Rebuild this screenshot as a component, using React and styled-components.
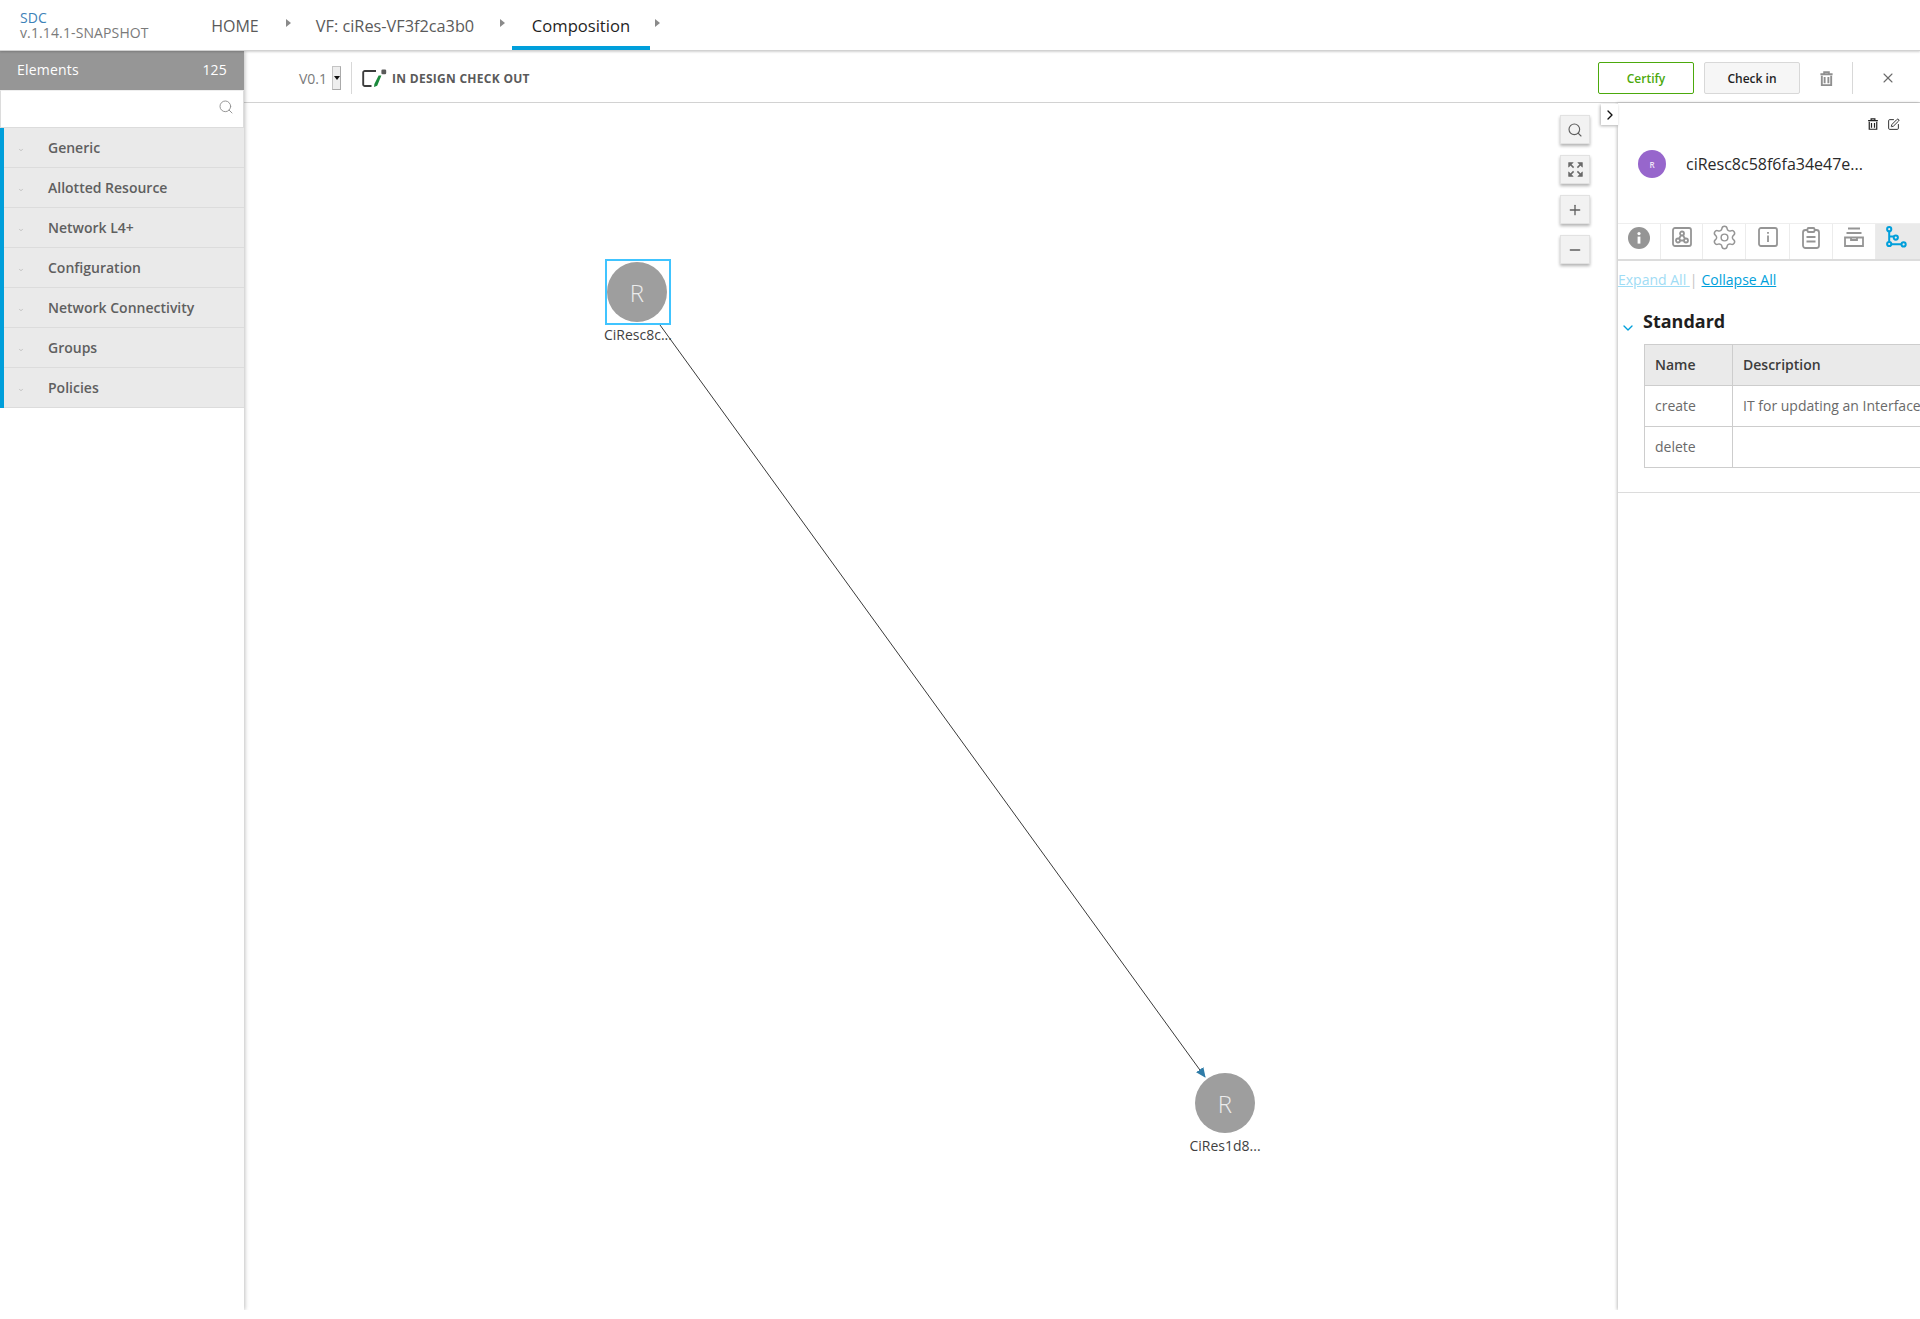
import React from "react";
import styled, { createGlobalStyle } from "styled-components";
import { Search, Plus, Minus, X, ChevronRight, ChevronDown, SquarePen, Settings } from "lucide-react";

const Global = createGlobalStyle`
  html, body { margin: 0; padding: 0; background: #fff; }
  body { font-family: "Open Sans", "Liberation Sans", sans-serif; color: #5a5a5a; overflow: hidden; }
  * { box-sizing: border-box; }
`;

const Page = styled.div`
  width: 1920px; height: 1310px; display: flex; flex-direction: column; overflow: hidden; position: relative;
`;
const Header = styled.header`
  height: 51px; flex: none; display: flex; align-items: stretch; background: #fff;
  border-bottom: 1px solid #d2d2d2; box-shadow: 0 1px 2px rgba(0,0,0,.18); position: relative; z-index: 3;
`;
const Brand = styled.div`
  width: 210px; flex: none; padding: 10px 0 0 20px; font-size: 14px; line-height: 15px; color: #7a7a7a; letter-spacing: 0.12px;
  span { display: block; color: #3d82b8; }
`;
const Crumb = styled.div`
  display: flex; align-items: center; justify-content: center; font-size: ${p => p.$fs || 16}px;
  color: ${p => (p.$active ? "#1f1f1f" : "#5a5a5a")}; white-space: nowrap;
  margin-left: ${p => p.$ml}px; width: ${p => p.$w}px; height: 50px; 
  border-bottom: ${p => (p.$active ? "4px solid #009fdb" : "4px solid transparent")};
  padding-top: ${p => (p.$active ? 5 : 6)}px;
`;
const CrumbArrow = styled.div`
  width: 0; height: 0; margin-left: ${p => p.$ml}px; margin-top: 19px;
  border-left: 5px solid #8a8a8a; border-top: 4.5px solid transparent; border-bottom: 4.5px solid transparent;
`;
const Body = styled.div`
  flex: 1; display: flex; min-height: 0;
`;
const Sidebar = styled.aside`
  width: 244px; flex: none; display: flex; flex-direction: column; background: #fff;
  box-shadow: 1px 0 4px rgba(0,0,0,.25); position: relative; z-index: 2;
`;
const SideHead = styled.div`
  height: 39px; background: #969696; color: #fff; font-size: 14px; padding: 0 17px 2px; flex: none; letter-spacing: 0.2px;
  display: flex; align-items: center; justify-content: space-between;
`;
const SearchBox = styled.div`
  height: 38px; flex: none; background: #fff; border: 1px solid #dcdcdc; border-top: 1px solid #eee;
  display: flex; align-items: center; justify-content: flex-end; padding: 0 9px 4px 0; color: #8f8f8f;
`;
const CatList = styled.div`
  border-left: 4px solid #009fdb;
`;
const Cat = styled.div`
  height: 40px; background: #eaeaea; border-bottom: 1px solid #dcdcdc; display: flex; align-items: center;
  font-size: 14px; font-weight: 600; color: #5f5f5f; padding-left: 44px; position: relative; padding-bottom: 1px;
`;
const CatMark = styled.i`
  position: absolute; left: 14px; top: 19px; color: #9a9a9a; display: flex;
`;
const Main = styled.main`
  flex: 1; min-width: 0; display: flex; flex-direction: column;
`;
const Toolbar = styled.div`
  height: 52px; flex: none; border-bottom: 1px solid #d2d2d2; display: flex; align-items: center; padding: 3px 0 0 55px; background:#fff;
`;
const Version = styled.span`
  font-size: 14px; color: #7a7a7a; margin-right: 5px;
`;
const VerSelect = styled.div`
  width: 9px; height: 24px; background: #eee; border: 1px solid #c4c4c4; border-right-color:#aaa; border-bottom-color:#aaa; position: relative; margin-right: 10px;
  &:after { content: ""; position: absolute; left: 0.5px; top: 9px; border-top: 4px solid #111; border-left: 3px solid transparent; border-right: 3px solid transparent; }
`;
const VSep = styled.div`
  width: 1px; height: 32px; background: #d8d8d8; margin: ${p => p.$m || "0"};
`;
const StatusText = styled.span`
  font-size: 12px; font-weight: 700; color: #5a5a5a; margin-left: 5px; letter-spacing: 0.28px;
`;
const Spacer = styled.div`flex: 1;`;
const Btn = styled.button`
  width: ${p => p.$w || 96}px; height: 32px; border-radius: 2px; font-family: inherit; font-size: 12px; font-weight: 600;
  padding: 0; background: ${p => (p.$green ? "#fff" : "#f6f6f6")}; color: ${p => (p.$green ? "#4ca90c" : "#1f1f1f")};
  border: 1px solid ${p => (p.$green ? "#4ca90c" : "#d8d8d8")}; margin-left: ${p => p.$ml || 0}px;
`;
const ToolIcon = styled.div`
  display: flex; color: ${p => p.$c || "#8f8f8f"}; margin: ${p => p.$m || "0"};
`;
const Work = styled.div`
  flex: 1; display: flex; min-height: 0;
`;
const Canvas = styled.div`
  flex: 1; position: relative; min-width: 0;
`;
const Overlay = styled.svg`
  position: absolute; left: 0; top: 0; width: 100%; height: 100%;
`;
const Node = styled.div`
  position: absolute; width: 60px; height: 60px; border-radius: 50%; background: #9e9e9e; color: #ececec;
  font-size: 24px; font-weight: 300; display: flex; align-items: center; justify-content: center;
`;
const NodeSel = styled.div`
  position: absolute; width: 66px; height: 66px; border: 2px solid #40c4ff;
`;
const NodeLabel = styled.div`
  position: absolute; width: 80px; text-align: center; font-size: 14px; line-height: 18px; color: #3f3f3f; white-space: nowrap;
`;
const Controls = styled.div`
  position: absolute; right: 28px; top: 12px; display: flex; flex-direction: column; gap: 11px;
`;
const Ctrl = styled.div`
  width: 30px; height: 29px; background: #f2f2f2; border: 1px solid #e2e2e2; box-shadow: 0 2px 3px rgba(0,0,0,.3);
  display: flex; align-items: center; justify-content: center; color: #5f5f5f;
`;
const Panel = styled.section`
  width: 302px; flex: none; position: relative; background: #fff; box-shadow: -1px 0 3px rgba(0,0,0,.25); display: flex; flex-direction: column;
`;
const Toggle = styled.div`
  position: absolute; left: -17px; top: 1px; width: 17px; height: 21px; background: #fff; box-shadow: -1px 1px 3px rgba(0,0,0,.3);
  display: flex; align-items: center; justify-content: center; color: #111;
`;
const PanelActions = styled.div`
  height: 33px; display: flex; justify-content: flex-end; align-items: flex-start; gap: 8px; padding: 15px 20px 0 0; color: #222; flex: none;
`;
const PanelTitle = styled.div`
  height: 87px; flex: none; display: flex; padding: 14px 0 0 20px; 
`;
const Avatar = styled.div`
  width: 28px; height: 28px; border-radius: 50%; background: #9766cc; color: #efe6f8; font-size: 8px; font-weight: 600; display: flex; align-items: center; justify-content: center;
`;
const TitleText = styled.div`
  font-size: 16px; color: #2a2a2a; margin-left: 20px; line-height: 29px;
`;
const Tabs = styled.div`
  height: 38px; flex: none; display: flex; border-bottom: 2px solid #dcdcdc; border-top: 1px solid #eee;
`;
const Tab = styled.div`
  width: ${p => p.$w}px; flex: none; display: flex; justify-content: center; padding-top: ${p => p.$pt ?? 3}px; background: ${p => (p.$active ? "#eaeaea" : "#fff")};
  border-right: ${p => (p.$active ? "none" : "1px solid #ececec")}; color: ${p => (p.$active ? "#009fdb" : "#959595")};
`;
const ReqTab = styled(Tab)`
  justify-content: flex-start; padding-left: 10px;
`;
const Links = styled.div`
  font-size: 14px; line-height: 18px; margin-top: 10px; color: #c4c4c4; display: flex; flex: none;
`;
const Divider = styled.span`
  margin: 0 4px 0 0;
`;
const LinkA = styled.a`
  text-decoration: underline; color: ${p => (p.$dim ? "#9fdcf5" : "#009fdb")}; white-space: pre;
`;
const SectionHead = styled.div`
  display: flex; margin-top: 19px; height: 26px; align-items: center; flex: none; position: relative;
`;
const SectionTitle = styled.div`
  font-size: 18px; font-weight: 700; color: #1f1f1f; margin-left: 25px; line-height: 24px;
`;
const Chevron = styled.div`
  position: absolute; left: 2px; top: 12px; color: #009fdb; display: flex;
`;
const TableWrap = styled.div`
  margin-top: 10px; flex: none; padding: 0 0 24px 26px; border-bottom: 1px solid #dcdcdc; overflow: hidden;
`;
const Table = styled.table`
  border-collapse: collapse; table-layout: fixed; width: 330px; font-size: 14px;
`;
const Th = styled.th`
  height: 41px; padding: 0 0 1px 10px; background: #eaeaea; border: 1px solid #cdcdcd; font-weight: 600; color: #3c3c3c; text-align: left; width: ${p => p.$w || "auto"};
`;
const Td = styled.td`
  height: 41px; padding: 0 0 1px 10px; border: 1px solid #cdcdcd; color: #6a6a6a; white-space: nowrap; overflow: hidden;
`;

const Trash = ({ size = 14, sw = 2 }) => (
  <svg width={size} height={size} viewBox="0 0 16 16" fill="none" stroke="currentColor" strokeWidth={sw}>
    <path d="M1.5 3.5h13M5.5 3V1.2h5V3M3 5v10h10V5" />
    <path d="M6 6.5v6.5M10 6.5v6.5" />
  </svg>
);
const Expand = () => (
  <svg width="15" height="15" viewBox="0 0 15 15" fill="none" stroke="#6a6a6a">
    <path d="M.6 5.2V.6h4.6zM14.4 5.2V.6H9.8zM.6 9.8v4.6h4.6zM14.4 9.8v4.6H9.8z" fill="#6a6a6a" strokeWidth=".6" />
    <path d="M2 2l3.6 3.6M13 2 9.4 5.6M2 13l3.6-3.6M13 13 9.4 9.4" strokeWidth="1.5" />
  </svg>
);
const InfoFill = () => (
  <svg width="22" height="22" viewBox="0 0 22 22">
    <circle cx="11" cy="11" r="11" fill="#959595" />
    <rect x="9.6" y="9.6" width="2.8" height="7" fill="#fff" />
    <circle cx="11" cy="6.6" r="1.6" fill="#fff" />
  </svg>
);
const Compose = () => (
  <svg width="20" height="20" viewBox="0 0 20 20" fill="none" stroke="#959595" strokeWidth="1.8">
    <rect x="1" y="1" width="18" height="18" rx="2" />
    <circle cx="10" cy="6.5" r="2" /><circle cx="6" cy="13.5" r="2" /><circle cx="14" cy="13.5" r="2" />
    <path d="M9 8.2 7 11.8M11 8.2l2 3.6M8 13.5h4" />
  </svg>
);
const InfoBox = () => (
  <svg width="20" height="20" viewBox="0 0 20 20" fill="none" stroke="#959595" strokeWidth="1.8">
    <rect x="1" y="1" width="18" height="18" rx="2" />
    <path d="M10 8.5V15" /><path d="M10 5v1.8" />
  </svg>
);
const Clip = () => (
  <svg width="18" height="22" viewBox="0 0 18 22" fill="none" stroke="#959595" strokeWidth="1.8">
    <rect x="1" y="3" width="16" height="18" rx="2.5" />
    <rect x="5.5" y="1" width="7" height="4" rx="1" fill="#fff" />
    <path d="M4.5 10h9M4.5 14.5h9" />
  </svg>
);
const Tray = () => (
  <svg width="20" height="20" viewBox="0 0 20 20" fill="none" stroke="#959595" strokeWidth="1.8">
    <path d="M4 1.5h12M2.5 6h15" />
    <path d="M1 10.5h18V19H1z" /><path d="M7 10.5v2.5h6v-2.5" />
  </svg>
);
const Reqs = () => (
  <svg width="21" height="22" viewBox="0 0 21 22" fill="none" stroke="#009fdb" strokeWidth="2">
    <circle cx="3.2" cy="3.2" r="2.1" /><circle cx="3.2" cy="18" r="2.1" /><circle cx="9.8" cy="11.6" r="2.1" /><circle cx="17.6" cy="18.4" r="2.1" />
    <path d="M3.2 5.3v10.6M5.3 18.2h10.2M3.2 10.4h4.6" />
  </svg>
);
const Pen = () => (
  <svg width="25" height="18" viewBox="0 0 25 18" fill="none">
    <path d="M14 2H3A1.6 1.6 0 0 0 1.2 3.6v11.8A1.6 1.6 0 0 0 3 17h6.5" stroke="#3d3d3d" strokeWidth="1.9" />
    <path d="M19.4 6.5 15.2 16.8 12 18l.4-3 4.2-8.5z" fill="#1a8a3c" />
    <rect x="19.4" y="0.5" width="4.8" height="4.8" rx="1.2" fill="#5a5a5a" />
  </svg>
);

const cats = ["Generic", "Allotted Resource", "Network L4+", "Configuration", "Network Connectivity", "Groups", "Policies"];

export default function App() {
  return (
    <Page>
      <Global />
      <Header>
        <Brand><span>SDC</span>v.1.14.1-SNAPSHOT</Brand>
        <Crumb $ml={0} $w={50}>HOME</Crumb>
        <CrumbArrow $ml={26} />
        <Crumb $ml={24} $w={160} $fs={16.3}>VF: ciRes-VF3f2ca3b0</Crumb>
        <CrumbArrow $ml={25} />
        <Crumb $ml={7} $w={138} $fs={16.6} $active>Composition</Crumb>
        <CrumbArrow $ml={5} />
      </Header>
      <Body>
        <Sidebar>
          <SideHead><span>Elements</span><span>125</span></SideHead>
          <SearchBox><Search size={16} strokeWidth={1.4} /></SearchBox>
          <CatList>
            {cats.map(c => (
              <Cat key={c}><CatMark><ChevronDown size={6} strokeWidth={2} /></CatMark>{c}</Cat>
            ))}
          </CatList>
        </Sidebar>
        <Main>
          <Toolbar>
            <Version>V0.1</Version>
            <VerSelect />
            <VSep $m="0 10px 0 0" />
            <Pen />
            <StatusText>IN DESIGN CHECK OUT</StatusText>
            <Spacer />
            <Btn $green>Certify</Btn>
            <Btn $ml={10}>Check in</Btn>
            <ToolIcon $m="0 0 0 19px"><Trash size={15} sw={2} /></ToolIcon>
            <VSep $m="0 0 0 18px" />
            <ToolIcon $c="#6a6a6a" $m="0 24px 0 27px"><X size={16} strokeWidth={1.6} /></ToolIcon>
          </Toolbar>
          <Work>
            <Canvas>
              <Overlay>
                <defs>
                  <marker id="arr" markerWidth="10" markerHeight="9" refX="9" refY="4.5" orient="auto" markerUnits="userSpaceOnUse">
                    <path d="M0 0 10 4.5 0 9z" fill="#2f7ca8" />
                  </marker>
                </defs>
                <line x1="416" y1="222" x2="961" y2="974" stroke="#3a3a3a" strokeWidth="1" markerEnd="url(#arr)" />
              </Overlay>
              <NodeSel style={{ left: 361, top: 156 }} />
              <Node style={{ left: 363, top: 159 }}>R</Node>
              <NodeLabel style={{ left: 358, top: 223, width: 72 }}>CiResc8c...</NodeLabel>
              <Node style={{ left: 951, top: 970 }}>R</Node>
              <NodeLabel style={{ left: 941, top: 1034 }}>CiRes1d8...</NodeLabel>
              <Controls>
                <Ctrl><Search size={16} strokeWidth={1.7} /></Ctrl>
                <Ctrl><Expand /></Ctrl>
                <Ctrl><Plus size={16} strokeWidth={2} /></Ctrl>
                <Ctrl><Minus size={16} strokeWidth={2} /></Ctrl>
              </Controls>
            </Canvas>
            <Panel>
              <Toggle><ChevronRight size={16} strokeWidth={2} /></Toggle>
              <PanelActions><Trash size={12} sw={1.6} /><SquarePen size={13} strokeWidth={1.7} /></PanelActions>
              <PanelTitle><Avatar>R</Avatar><TitleText>ciResc8c58f6fa34e47e...</TitleText></PanelTitle>
              <Tabs>
                <Tab $w={43}><InfoFill /></Tab>
                <Tab $w={42}><Compose /></Tab>
                <Tab $w={43} $pt={0}><Settings size={27} strokeWidth={1.3} /></Tab>
                <Tab $w={44}><InfoBox /></Tab>
                <Tab $w={43}><Clip /></Tab>
                <Tab $w={43}><Tray /></Tab>
                <ReqTab $w={44} $active $pt={2}><Reqs /></ReqTab>
              </Tabs>
              <Links>
                <LinkA $dim>Expand All </LinkA><Divider>|</Divider><LinkA>Collapse All</LinkA>
              </Links>
              <SectionHead>
                <Chevron><ChevronDown size={16} strokeWidth={2} /></Chevron>
                <SectionTitle>Standard</SectionTitle>
              </SectionHead>
              <TableWrap>
                <Table>
                  <thead><tr><Th $w="88px">Name</Th><Th>Description</Th></tr></thead>
                  <tbody>
                    <tr><Td>create</Td><Td>IT for updating an Interface</Td></tr>
                    <tr><Td>delete</Td><Td /></tr>
                  </tbody>
                </Table>
              </TableWrap>
            </Panel>
          </Work>
        </Main>
      </Body>
    </Page>
  );
}
